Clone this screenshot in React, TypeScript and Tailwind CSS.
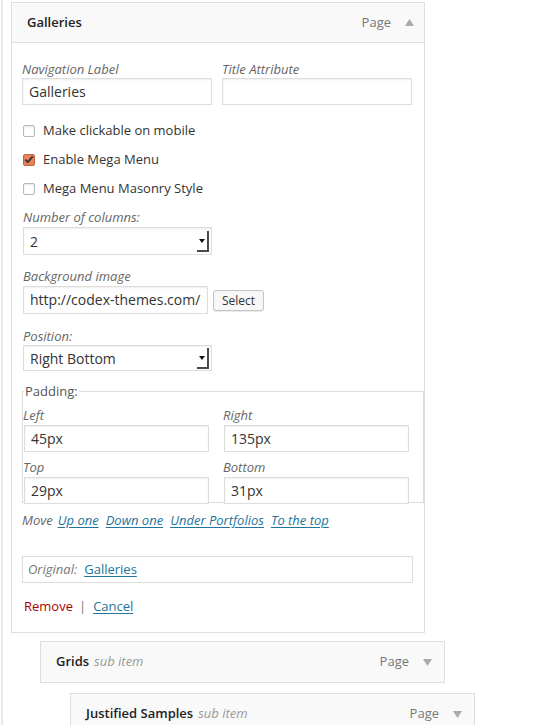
import React from "react";

const inputCls =
  "h-[27px] border border-[#dddddd] bg-white px-[6px] text-[14px] leading-[25px] text-[#333] shadow-[inset_0_1px_2px_rgba(0,0,0,0.07)] overflow-hidden whitespace-nowrap";

const Label = ({ children, className = "" }: { children: React.ReactNode; className?: string }) => (
  <div className={"italic text-[13px] leading-[17px] text-[#666] " + className}>{children}</div>
);

const Check = ({ checked, label }: { checked?: boolean; label: string }) => (
  <div className="flex h-[29px] items-center">
    <div className="ml-[1px] flex h-[12px] w-[12px] items-center justify-center">
      {checked ? (
        <div className="flex h-[12px] w-[12px] items-center justify-center rounded-[2px] border border-[#c7653e] bg-[#e3835d]">
          <svg width="10" height="9" viewBox="0 0 10 9">
            <path d="M1.2 4.6 L3.8 7.2 L8.8 1.4" fill="none" stroke="#3c3330" strokeWidth="1.9" />
          </svg>
        </div>
      ) : (
        <div className="h-[12px] w-[12px] rounded-[2px] border border-[#b4b9be] bg-white shadow-[inset_0_1px_2px_rgba(0,0,0,0.1)]" />
      )}
    </div>
    <span className="ml-[8px] text-[13px] text-[#333]">{label}</span>
  </div>
);

const Select = ({ value, className = "" }: { value: string; className?: string }) => (
  <div className={"flex items-center border border-[#dddddd] bg-white pl-[6px] shadow-[inset_0_1px_2px_rgba(0,0,0,0.07)] " + className}>
    <span className="flex-1 text-[14px] text-[#333]">{value}</span>
    <div className="mr-[2px] flex h-[21px] w-[12px] items-center justify-center border-b-[2px] border-r-[2px] border-[#4a4a4a]">
      <svg width="6" height="4" viewBox="0 0 6 4" className="mt-[2px]">
        <path d="M0 0 H6 L3 4 Z" fill="#111" />
      </svg>
    </div>
  </div>
);

const Link = ({ children, italic }: { children: React.ReactNode; italic?: boolean }) => (
  <a className={"text-[#21759b] underline underline-offset-[2px] " + (italic ? "italic" : "")}>{children}</a>
);

const SubItem = ({ title, className = "" }: { title: string; className?: string }) => (
  <div className={"flex h-[42px] items-center justify-between border border-[#dfdfdf] bg-[#f9f9f9] pl-[15px] pr-[12px] " + className}>
    <div className="text-[13px]">
      <span className="font-semibold text-[#222]">{title}</span>
      <span className="ml-[5px] italic text-[#999]">sub item</span>
    </div>
    <div className="flex items-center text-[13px] text-[#777]">
      Page
      <svg width="9" height="7" viewBox="0 0 9 7" className="ml-[14px]">
        <path d="M0 0 H9 L4.5 7 Z" fill="#aaa" />
      </svg>
    </div>
  </div>
);

export default function App() {
  return (
    <div className="h-[725px] w-[534px] overflow-hidden bg-white pl-[1px] font-['Open_Sans',sans-serif]">
      <div className="h-full border-l-[2px] border-[#e9e9e9] pt-[2px]">
        <div className="ml-[8px] w-[414px] border border-[#dfdfdf] bg-white">
          <div className="flex h-[40px] items-center justify-between border-b border-[#dfdfdf] bg-[#f9f9f9] pl-[15px] pr-[10px]">
            <span className="text-[13px] font-semibold text-[#222]">Galleries</span>
            <div className="flex items-center text-[13px] text-[#777]">
              Page
              <svg width="9" height="7" viewBox="0 0 9 7" className="ml-[14px]">
                <path d="M0 7 H9 L4.5 0 Z" fill="#aaa" />
              </svg>
            </div>
          </div>

          <div className="pb-[17px] pl-[10px] pr-[11px] pt-[18px]">
            <div className="flex gap-[10px]">
              <div className="w-[190px]">
                <Label>Navigation Label</Label>
                <div className={inputCls}>Galleries</div>
              </div>
              <div className="w-[190px]">
                <Label>Title Attribute</Label>
                <div className={inputCls}></div>
              </div>
            </div>

            <div className="mt-[11px]">
              <Check label="Make clickable on mobile" />
              <Check checked label="Enable Mega Menu" />
              <Check label="Mega Menu Masonry Style" />
            </div>

            <Label className="mt-[6px] pl-[1px]">Number of columns:</Label>
            <Select value="2" className="ml-[1px] mt-[1px] h-[28px] w-[189px]" />

            <Label className="mt-[13px] pl-[1px]">Background image</Label>
            <div className="mt-[1px] flex items-center">
              <div className={inputCls + " ml-[1px] h-[28px] w-[185px] leading-[26px]"}>http://codex-themes.com/</div>
              <button className="ml-[5px] h-[21px] rounded-[3px] border border-[#c4c4c4] bg-[#f7f7f7] px-[8px] text-[12px] leading-[19px] text-[#333] shadow-[0_1px_0_rgba(0,0,0,0.08)]">
                Select
              </button>
            </div>

            <Label className="mt-[14px] pl-[1px]">Position:</Label>
            <Select value="Right Bottom" className="ml-[1px] h-[26px] w-[189px]" />

            <fieldset className="-mr-[11px] mt-[12px] border border-[#dddddd]">
              <legend className="ml-[1px] px-[1px] text-[13px] leading-[17px] text-[#555]">Padding:</legend>
              <div className="mt-[7px] grid grid-cols-2">
                <div>
                  <Label>Left</Label>
                  <div className={inputCls + " ml-[1px] mt-[1px] w-[185px]"}>45px</div>
                </div>
                <div>
                  <Label>Right</Label>
                  <div className={inputCls + " ml-[1px] mt-[1px] w-[185px]"}>135px</div>
                </div>
                <div className="mt-[7px]">
                  <Label>Top</Label>
                  <div className={inputCls + " -mb-[2px] ml-[1px] mt-[1px] w-[185px]"}>29px</div>
                </div>
                <div className="mt-[7px]">
                  <Label>Bottom</Label>
                  <div className={inputCls + " -mb-[2px] ml-[1px] mt-[1px] w-[185px]"}>31px</div>
                </div>
              </div>
            </fieldset>

            <div className="mt-[8px] flex gap-[7px] text-[13px] leading-[18px] italic">
              <span className="mr-[-2px] text-[#666]">Move</span>
              <Link italic>Up one</Link>
              <Link italic>Down one</Link>
              <Link italic>Under Portfolios</Link>
              <Link italic>To the top</Link>
            </div>

            <div className="mt-[27px] flex h-[27px] items-center border border-[#dddddd] pl-[5px] text-[13px]">
              <span className="italic text-[#777]">Original:</span>
              <span className="ml-[7px]">
                <Link>Galleries</Link>
              </span>
            </div>

            <div className="mt-[14px] flex items-center pl-[2px] text-[13px] leading-[18px]">
              <span className="text-[#a00]">Remove</span>
              <span className="mx-[6px] text-[#777]">|</span>
              <span className="ml-[1px]">
                <Link>Cancel</Link>
              </span>
            </div>
          </div>
        </div>

        <SubItem title="Grids" className="ml-[37px] mt-[8px] w-[405px]" />
        <SubItem title="Justified Samples" className="ml-[67px] mt-[10px] w-[405px]" />
      </div>
    </div>
  );
}
